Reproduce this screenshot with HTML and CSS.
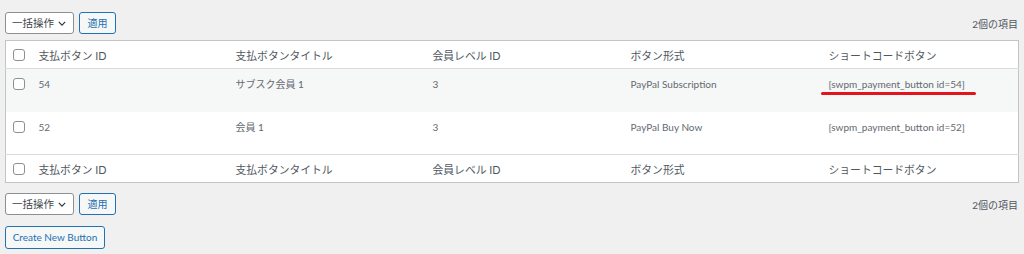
FILE: index.html
```html
<!DOCTYPE html>
<html lang="ja">
<head>
<meta charset="utf-8">
<title>支払ボタン</title>
<link rel="stylesheet" href="styles.css">
</head>
<body>
<div class="wrap">
  <div class="tablenav top">
    <div class="actions">
      <div class="bulk-select"><span>一括操作</span><svg class="chev" viewBox="0 0 10 6" width="8" height="5"><path d="M1 1l4 4 4-4" fill="none" stroke="#2c3338" stroke-width="1.4"/></svg></div>
      <button class="btn">適用</button>
    </div>
    <div class="count">2個の項目</div>
  </div>

  <table class="list">
    <colgroup><col class="c-check"><col class="c-a"><col class="c-a"><col class="c-b"><col class="c-b"><col></colgroup>
    <thead>
      <tr>
        <th class="check"><span class="cb"></span></th>
        <th>支払ボタン ID</th>
        <th>支払ボタンタイトル</th>
        <th>会員レベル ID</th>
        <th>ボタン形式</th>
        <th>ショートコードボタン</th>
      </tr>
    </thead>
    <tbody>
      <tr class="alt">
        <td class="check"><span class="cb"></span></td>
        <td>54</td>
        <td>サブスク会員 1</td>
        <td>3</td>
        <td>PayPal Subscription</td>
        <td><span class="marked">[swpm_payment_button id=54]</span></td>
      </tr>
      <tr>
        <td class="check"><span class="cb"></span></td>
        <td>52</td>
        <td>会員 1</td>
        <td>3</td>
        <td>PayPal Buy Now</td>
        <td>[swpm_payment_button id=52]</td>
      </tr>
    </tbody>
    <tfoot>
      <tr>
        <th class="check"><span class="cb"></span></th>
        <th>支払ボタン ID</th>
        <th>支払ボタンタイトル</th>
        <th>会員レベル ID</th>
        <th>ボタン形式</th>
        <th>ショートコードボタン</th>
      </tr>
    </tfoot>
  </table>

  <div class="tablenav bottom">
    <div class="actions">
      <div class="bulk-select"><span>一括操作</span><svg class="chev" viewBox="0 0 10 6" width="8" height="5"><path d="M1 1l4 4 4-4" fill="none" stroke="#2c3338" stroke-width="1.4"/></svg></div>
      <button class="btn">適用</button>
    </div>
    <div class="count">2個の項目</div>
  </div>

  <div class="create-row">
    <button class="btn create">Create New Button</button>
  </div>
</div>
</body>
</html>
```

FILE: styles.css
```css
* { box-sizing: border-box; }
html, body { margin: 0; padding: 0; }
body {
  background: #f0f0f1;
  font-family: Lato, "Noto Sans CJK JP", sans-serif;
  color: #3c434a;
  width: 1024px;
  height: 254px;
  overflow: hidden;
}
.wrap { padding: 0 5px; }

.tablenav {
  display: flex;
  align-items: center;
  justify-content: space-between;
  height: 22px;
}
.tablenav.top { margin-top: 12px; margin-bottom: 6px; }
.tablenav.bottom { margin-top: 10px; }
.actions { display: flex; gap: 5px; align-items: center; }

.bulk-select {
  width: 69px;
  height: 22px;
  border: 1px solid #8c8f94;
  border-radius: 3px;
  background: #fff;
  display: flex;
  align-items: center;
  justify-content: space-between;
  padding: 0 7px 0 6px;
  font-size: 10.5px;
  color: #3c434a;
  white-space: nowrap;
}
.bulk-select span { line-height: 1; }
.chev { display: block; }

.btn {
  height: 22px;
  width: 37px;
  padding: 0;
  border: 1px solid #2271b1;
  border-radius: 3px;
  background: #f6f7f7;
  color: #2271b1;
  font-family: inherit;
  font-size: 10px;
  line-height: 1;
  white-space: nowrap;
  cursor: pointer;
}
.btn.create {
  height: 23px;
  width: 100px;
  font-size: 10px;
}
.create-row { margin-top: 10px; }

.count {
  font-size: 10px;
  color: #50575e;
  padding-right: 1px;
}

.list {
  width: 100%;
  border-collapse: collapse;
  table-layout: fixed;
  background: #fff;
  border: 1px solid #c3c4c7;
}
.c-check { width: 23px; }
.c-a { width: 197px; }
.c-b { width: 198px; }

.list th {
  height: 28px;
  padding: 0 10px;
  text-align: left;
  font-weight: 400;
  font-size: 10.8px;
  color: #50575e;
  vertical-align: middle;
  white-space: nowrap;
}
.list thead th { border-bottom: 1px solid #dcdcde; }
.list tfoot th { border-top: 1px solid #dcdcde; }

.list td {
  height: 43px;
  padding: 8px 10px 0;
  vertical-align: top;
  font-size: 10px;
  line-height: 14px;
  color: #646970;
  white-space: nowrap;
}
.list tr.alt td { background: #f6f7f7; }

.list .check { padding: 0 0 0 7px; }
.list td.check { padding-top: 9px; }
.cb {
  display: block;
  width: 12px;
  height: 12px;
  border: 1px solid #8c8f94;
  border-radius: 3px;
  background: #fff;
}

.marked { position: relative; display: inline-block; }
.marked::after {
  content: "";
  position: absolute;
  left: -8px;
  right: -11px;
  top: 15px;
  height: 3px;
  border-radius: 1.5px;
  background: #e3141c;
}
```
